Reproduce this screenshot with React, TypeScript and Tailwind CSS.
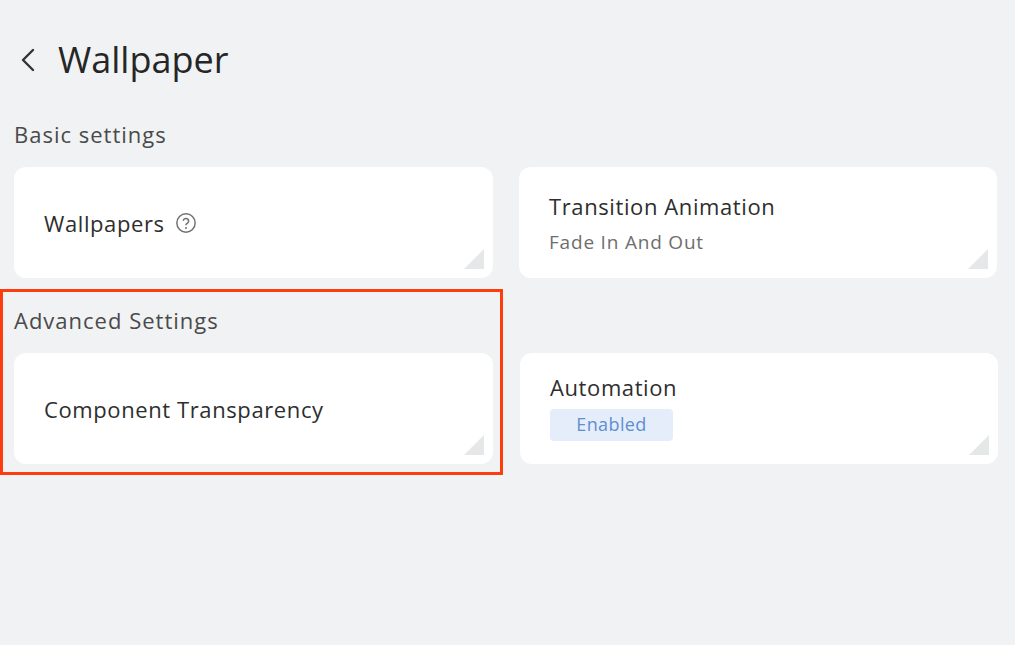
import React from "react"

const font = { fontFamily: '"Open Sans", "Noto Sans", sans-serif' }

function ResizeMark() {
    return (
        <svg
            className="absolute right-[8px] bottom-[8px]"
            width="22"
            height="22"
            viewBox="0 0 22 22"
        >
            <polygon points="21,1 21,21 1,21" fill="#e6e7e9" />
        </svg>
    )
}

function HelpIcon() {
    return (
        <svg width="22" height="22" viewBox="0 0 24 24" fill="none" stroke="#707070" strokeWidth="1.6" strokeLinecap="round" strokeLinejoin="round">
            <circle cx="12" cy="12" r="10" />
            <path d="M9.1 9a3 3 0 0 1 5.8 1c0 2-2.9 2.6-2.9 4" />
            <path d="M12 17.5h.01" strokeWidth="2.2" />
        </svg>
    )
}

function Card({ children }: { children: React.ReactNode }) {
    return (
        <div className="relative h-[111px] rounded-[12px] bg-white pl-[30px] flex flex-col justify-center">
            {children}
            <ResizeMark />
        </div>
    )
}

export default function App() {
    return (
        <div className="min-h-screen bg-[#f1f2f4] text-[#2e2e2e]" style={font}>
            {/* Header */}
            <div className="flex items-center pt-[40px] h-[80px] pl-[18px]">
                <svg width="20" height="28" viewBox="0 0 20 28" fill="none" stroke="#333" strokeWidth="2.4" strokeLinecap="round" strokeLinejoin="round">
                    <path d="M15 4 L5 14 L15 24" />
                </svg>
                <h1 className="ml-[20px] text-[36px] leading-[40px] text-[#262626]">Wallpaper</h1>
            </div>

            {/* Basic settings */}
            <div className="mt-[40px] pl-[14px] text-[22px] leading-[28px] tracking-[1px] text-[#4a4a4a]">Basic settings</div>
            <div className="mt-[19px] flex gap-[26px] pl-[14px]">
                <div className="w-[479px]">
                    <Card>
                        <div className="flex items-center gap-[10px]">
                            <span className="text-[22px] leading-[28px] tracking-[0.6px]">Wallpapers</span>
                            <HelpIcon />
                        </div>
                    </Card>
                </div>
                <div className="w-[478px]">
                    <Card>
                        <div className="text-[22px] leading-[28px] tracking-[0.6px]">Transition Animation</div>
                        <div className="mt-[10px] text-[19px] leading-[24px] tracking-[0.8px] text-[#6e6e6e]">Fade In And Out</div>
                    </Card>
                </div>
            </div>

            {/* Advanced settings */}
            <div className="mt-[11px] flex">
                <div className="w-[503px] border-[3px] border-[#fe3d0e] pl-[11px] pr-[7px] pt-[14px] pb-[8px]">
                    <div className="text-[22px] leading-[28px] tracking-[1px] text-[#4a4a4a]">Advanced Settings</div>
                    <div className="mt-[19px]">
                        <Card>
                            <span className="text-[22px] leading-[28px] tracking-[0.6px]">Component Transparency</span>
                        </Card>
                    </div>
                </div>
                <div className="ml-[17px] w-[478px] pt-[64px]">
                    <Card>
                        <div className="text-[22px] leading-[28px] tracking-[0.6px]">Automation</div>
                        <div className="mt-[8px] mb-[4px] flex h-[32px] w-[123px] items-center justify-center rounded-[4px] bg-[#e4edf9] text-[18px] tracking-[0.4px] text-[#5d8fd1]">
                            Enabled
                        </div>
                    </Card>
                </div>
            </div>
        </div>
    )
}
